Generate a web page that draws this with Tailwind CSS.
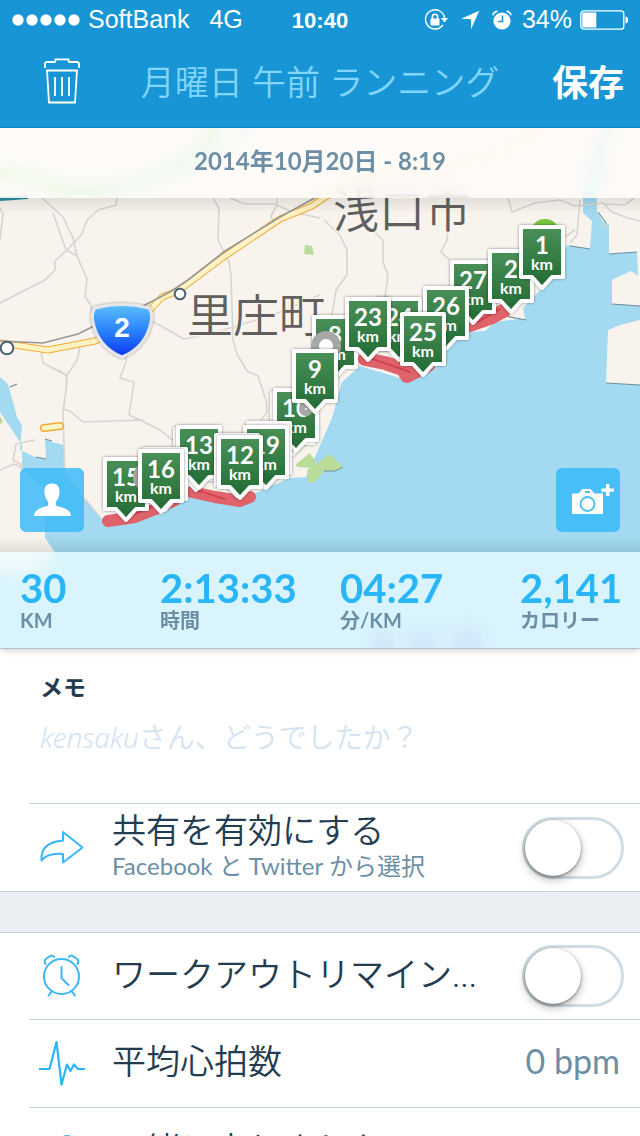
<!DOCTYPE html>
<html lang="ja">
<head>
  <meta charset="UTF-8">
  <meta name="viewport" content="width=device-width, initial-scale=1">
  <title>月曜日 午前 ランニング</title>
  <script src="https://cdn.jsdelivr.net/npm/@tailwindcss/browser@4"></script>
</head>
<body class="bg-white font-['Lato','Noto_Sans_CJK_JP',sans-serif] text-[#243c50]">

  <div class="h-screen flex flex-col overflow-hidden">

    <!-- Header -->
    <header class="shrink-0 h-32 bg-[#1795d4] text-white border-b border-[#0f85c4]">
      <!-- Status bar -->
      <div class="h-10 px-3 grid grid-cols-[1fr_auto_1fr] items-center font-['Liberation_Sans',sans-serif] text-[25px]">
        <div class="flex items-center">
          <svg class="w-[70px] h-3" viewBox="0 0 70 12" fill="currentColor">
            <circle cx="6" cy="6" r="5.7" /><circle cx="20" cy="6" r="5.7" /><circle cx="34" cy="6" r="5.7" /><circle cx="48" cy="6" r="5.7" /><circle cx="62" cy="6" r="5.7" />
          </svg>
          <span class="ml-1.5">SoftBank</span>
          <span class="ml-5">4G</span>
        </div>
        <span class="text-[22px] font-bold">10:40</span>
        <div class="flex items-center justify-end">
          <!-- rotation lock -->
          <svg class="w-6 h-6" viewBox="0 0 24 24" fill="none" stroke="currentColor" stroke-width="1.4">
            <path d="M18.9 17A9.6 9.6 0 1 1 20.6 10" />
            <path d="M17 10h7l-3.5 4.5z" fill="currentColor" stroke="none" />
            <rect x="6.5" y="10.5" width="9" height="7" rx=".8" fill="currentColor" stroke="none" />
            <path d="M8.4 11V8.8a2.6 2.6 0 0 1 5.2 0V11" stroke-width="1.6" />
          </svg>
          <!-- location arrow -->
          <svg class="w-5 h-5 ml-3" viewBox="0 0 20 20" fill="currentColor">
            <path d="M19.3.8 11 19.2V9.3L1 8.8z" />
          </svg>
          <!-- alarm -->
          <svg class="w-5 h-5 ml-3" viewBox="0 0 20 20" fill="none">
            <circle cx="10" cy="11" r="8.6" fill="currentColor" />
            <path d="M.8 5.2Q2 1.6 5.4 1.4M19.2 5.2Q18 1.6 14.6 1.4" stroke="currentColor" stroke-width="1.6" />
            <path d="M10.5 5.5v6H6.2" stroke="#1795d4" stroke-width="1.6" />
          </svg>
          <span class="ml-2.5">34%</span>
          <svg class="w-12 h-5 ml-2" viewBox="0 0 48 20">
            <rect x=".8" y=".8" width="43" height="18.4" rx="3" fill="none" stroke="currentColor" stroke-width="1.3" />
            <rect x="2.3" y="2.5" width="14" height="15" fill="currentColor" />
            <path d="M45.5 6.5q2.500 0 2.500 3.500t-2.500 3.500z" fill="currentColor" />
          </svg>
        </div>
      </div>

      <!-- Nav bar -->
      <div class="h-[84px] pl-10 pr-4 flex items-center justify-between">
        <button type="button" aria-label="削除" class="w-11">
          <svg class="w-11 h-12" viewBox="0 0 44 48" fill="none" stroke="currentColor" stroke-width="1.8">
            <path d="M5 10V6q0-2 2-2h7.500q1 0 1-1.200V1.400h13v1.400q0 1.200 1 1.200H37q2 0 2 2v4" />
            <path d="M7 12.500h30l-2 32H9z" />
            <path d="M15 19v19M22 19v19M29 19v19" />
          </svg>
        </button>
        <h1 class="ml-1 text-[34px] leading-10 font-[350] text-[#82d5fb]">月曜日 午前 ランニング</h1>
        <button type="button" class="text-[36px] leading-10 font-bold">保存</button>
      </div>
    </header>

    <!-- Map -->
    <section class="relative shrink-0 h-[521px] flex flex-col border-b border-[#b5c3d3] shadow-md">
      <svg class="absolute inset-0 w-full h-full" viewBox="0 128 640 520" preserveAspectRatio="xMidYMid slice">
        <defs>
          <linearGradient id="pinFill" x1="0" y1="0" x2="0" y2="1">
            <stop offset="0" stop-color="#4a9058" />
            <stop offset="1" stop-color="#216a34" />
          </linearGradient>
          <linearGradient id="shieldFill" x1="0" y1="0" x2="0" y2="1">
            <stop offset="0" stop-color="#5cc0fb" />
            <stop offset=".5" stop-color="#2a83fa" />
            <stop offset="1" stop-color="#0a35f5" />
          </linearGradient>
          <filter id="pinShadow" x="-20%" y="-20%" width="140%" height="140%">
            <feDropShadow dx="0" dy="0" stdDeviation="1.500" flood-color="#000" flood-opacity=".45" />
          </filter>
          <linearGradient id="edge" x1="0" y1="0" x2="0" y2="1">
            <stop offset="0" stop-color="#000" stop-opacity=".09" />
            <stop offset="1" stop-color="#000" stop-opacity="0" />
          </linearGradient>
          <path id="pin" d="M-21 2H21V52H10L0 63-10 52H-21Z" fill="url(#pinFill)" stroke="#fff" stroke-width="4" stroke-linejoin="round" filter="url(#pinShadow)" />
        </defs>

        <rect y="128" width="640" height="520" fill="#f8f4ed" />

        <!-- sea and inlets -->
        <g fill="#a3daf1">
          <path d="M105 522 160 512 185 492 235 503 262 490 290 478 306 477 318 450 332 418 342 382 360 366 400 378 440 350 465 332 485 331 495 322 525 318 523 308 540 290 552 262 568 245 590 248 590 228 583 213V190L602 128H611L597 195V212L603 222 609 224V254L637 252 638 276 631 271 612 280V304L640 306V648H0V574L42 572 55 552 45 538V490L22 468 22 445 0 412V377L8 384 17 417 22 425 20 450 35 457 46 459 45 439 52 442 64 445V474L78 492Z" />
        </g>
        <path d="M640 320 620 325 608 330 606 383 640 385Z" fill="#f8f4ed" />
        <path d="M570 246 590 248 592 221 583 213 582 225Z" fill="#f8f4ed" />
        <path d="M503 314 525 320 521 308Z" fill="#f8f4ed" />
        <path d="M570 246 590 249M609 254 637 252M612 304 640 306M606 383 640 385M505 316 526 320M10 387 17 384M598 212 606 223M36 457 46 459M45 439 52 441" fill="none" stroke="#6f8f99" stroke-width="1.200" />
        <path d="M0 416 3 422 0 424Z" fill="#b9dd98" />

        <!-- islands and parks -->
        <g fill="#b9dd98">
          <path d="M295 465 309 452 316 462 312 468 298 467Z" />
          <path d="M307 470 322 460 330 454 336 460 343 467 335 471 324 471 314 483 308 482Z" />
          <path d="M305 245 312 246 314 255 304 254Z" />
        </g>
        <path d="M292 477 288 455 308 445 310 453 296 464Z" fill="#f8f4ed" />
        <path d="M324 471H335L343 467" fill="none" stroke="#6f8f99" />

        <!-- side roads -->
        <g fill="none" stroke="#d6d5cf" stroke-width="1.600" stroke-linejoin="round">
          <path d="M0 303 45 280 55 270 55 261 67 250 82 234 87 220 98 210 116 205 118 190" />
          <path d="M53 213 66 250 77 256M42 198 63 217 73 238 77 256 87 279 85 297 91 305 92 318 100 330" />
          <path d="M213 198 219 208 218 240 229 262 231 275 233 340 237 354 247 371 258 376 266 400 267 412 261 420" />
          <path d="M230 198 245 204 275 204 292 212 320 218M277 198V205L271 216 273 222" />
          <path d="M152 321 184 339 210 334 240 325 275 314 320 295" />
          <path d="M41 352 43 363 66 375 67 386M80 347 77 360 67 375 66 390 63 412 65 475 100 517" />
          <path d="M127 350 126 362 120 378 134 382 129 415 142 421 160 430 175 442M63 409 70 411 83 422 143 420" />
          <path d="M0 470 14 464 22 468M35 440 16 444 13 460 22 465 22 475" />
          <path d="M324 220 340 235 347 250V275L336 290 332 315M370 228 383 240V262L388 275 385 297M448 230 447 240 441 252 453 263" />
          <path d="M508 198 512 212 535 203 560 200 575 206 603 203 612 212 625 217 640 221M605 204 625 205 634 198" />
          <path d="M570 243 577 235 580 200M603 225 609 228M575 230 560 240" />
          <path d="M0 208 3 214 0 240M58 370 67 376" />
        </g>

        <!-- green expressway -->
        <path d="M0 173Q30 173 50 184T110 188 165 172Q205 155 216 128" fill="none" stroke="#8be87f" stroke-width="9" />
        <path d="M110 192Q160 185 190 165T255 128" fill="none" stroke="#bfe3ef" stroke-width="6" />
        <path d="M0 199 28 197" stroke="#2a8d9b" stroke-width="4" />

        <!-- route 2 -->
        <g fill="none" stroke-linejoin="round">
          <path d="M0 343 48 350 95 341 140 321 162 297 178 291 225 256 280 219 312 206 345 184 400 170Q480 165 505 150L540 128" stroke="#f2ab35" stroke-width="7" />
          <path d="M0 343 48 350 95 341 140 321 162 297 178 291 225 256 280 219 312 206 345 184 400 170Q480 165 505 150L540 128" stroke="#fff2c4" stroke-width="5" />
          <path d="M0 341 43 343 78 334 110 318 143 306 170 292 188 280 225 251 280 217 320 195" stroke="#979797" stroke-width="1.600" />
          <path d="M44 428 60 426" stroke="#f2ab35" stroke-width="8" stroke-linecap="round" />
          <path d="M44 428 60 426" stroke="#fff6c8" stroke-width="5" stroke-linecap="round" />
        </g>
        <g fill="#fff" stroke="#4c6377" stroke-width="2">
          <circle cx="180" cy="294" r="5.300" /><circle cx="7" cy="348" r="6.300" />
        </g>

        <!-- place names -->
        <g class="font-['Noto_Sans_CJK_JP',sans-serif] font-[350] text-[46px]" fill="#606060" stroke="#f8f4ed" stroke-width="3" paint-order="stroke">
          <text x="187" y="332">里庄町</text>
          <text x="333" y="227">浅口市</text>
        </g>
        <path d="M372 630H394V648H372ZM410 630H437V648H410ZM452 628H482V648H452Z" fill="#86a8f0" />

        <!-- route shield -->
        <g filter="url(#pinShadow)">
          <path d="M95 308Q122 301 149 308 153 313 151 322 146 347 122 357 98 347 93 322 91 313 95 308Z" fill="url(#shieldFill)" stroke="#e6e6ea" stroke-width="3" />
        </g>
        <text x="122" y="337" text-anchor="middle" fill="#fff" class="font-['Liberation_Sans',sans-serif] font-bold text-[28px]">2</text>

        <!-- run track -->
        <g fill="none" stroke="#e0626a" stroke-linecap="round" stroke-linejoin="round">
          <path d="M108 521 135 517 158 508 175 500M192 492 215 497 240 501 250 497" stroke-width="12" />
          <path d="M365 359 385 363 403 369 407 376 428 365M470 325 490 318 505 310" stroke-width="14" />
          <path d="M130 516 160 503M196 490 225 499M370 358 410 372M478 322 500 309" stroke="#cc3f4b" stroke-width="1.500" />
        </g>
        <circle cx="545" cy="234" r="15" fill="#78c53c" />

        <g id="pins"></g>

        <rect y="198" width="640" height="16" fill="url(#edge)" />
        <rect y="536" width="640" height="16" fill="url(#edge)" transform="rotate(180 320 544)" />
      </svg>

      <div class="relative h-[70px] flex items-center justify-center bg-[#fffdfa]/80 backdrop-blur-sm text-2xl leading-8 pb-1 font-bold text-[#6c8fa6]">
        <time datetime="2014-10-20T08:19">2014年10月20日 - 8:19</time>
      </div>

      <div class="relative flex-1 p-5 flex items-end justify-between">
        <button type="button" aria-label="プロフィール" class="w-16 h-16 rounded-md bg-[#3dbaf8]/85 text-white">
          <svg class="w-16 h-16" viewBox="0 0 64 64" fill="currentColor">
            <path d="M32 15.500c5.500 0 8 3.500 7.500 9-.3 4.500-2 7.500-3.700 9.500v3.500c6 2 15 3.500 15.200 10.500H14c.2-7 8.500-8.500 14.200-10.500V34c-1.700-2-3.400-5-3.700-9.500-.5-5.500 2-9 7.500-9z" />
          </svg>
        </button>
        <button type="button" aria-label="写真を追加" class="w-16 h-16 rounded-md bg-[#3dbaf8]/90 text-white">
          <svg class="w-16 h-16" viewBox="0 0 64 64" fill="currentColor">
            <path d="M16 25.500h6.500l4-4.500h8l4 4.500H47V46H16z" />
            <path d="M29 23h5v2H29z" fill="#4abff6" />
            <circle cx="31.500" cy="36" r="7" fill="none" stroke="#4abff6" stroke-width="1.800" />
            <path d="M50 16h3.400v4.500H58v3.200h-4.600V28H50v-4.300h-4.500v-3.200H50z" />
          </svg>
        </button>
      </div>

      <!-- Totals -->
      <dl class="relative h-24 pl-5 pt-4 grid grid-cols-[7fr_9fr_9fr_6fr] bg-[#ebfcff]/75 backdrop-blur-sm text-xl font-bold text-[#6c8fa6]">
        <div class="flex flex-col-reverse justify-end">
          <dt class="leading-6">KM</dt>
          <dd class="text-[40px] leading-10 text-[#29b6f9]">30</dd>
        </div>
        <div class="flex flex-col-reverse justify-end">
          <dt class="leading-6">時間</dt>
          <dd class="text-[40px] leading-10 text-[#29b6f9]">2:13:33</dd>
        </div>
        <div class="flex flex-col-reverse justify-end">
          <dt class="leading-6">分/KM</dt>
          <dd class="text-[40px] leading-10 text-[#29b6f9]">04:27</dd>
        </div>
        <div class="flex flex-col-reverse justify-end">
          <dt class="leading-6">カロリー</dt>
          <dd class="text-[40px] leading-10 text-[#29b6f9]">2,141</dd>
        </div>
      </dl>
    </section>

    <!-- Details -->
    <main class="flex-1 min-h-0 overflow-hidden">
      <div class="h-[154px] px-10 pt-5">
        <label for="memo" class="block text-[23px] leading-9 font-bold">メモ</label>
        <div class="relative mt-3">
          <textarea id="memo" rows="1" placeholder=" " class="peer block w-full h-20 resize-none outline-none bg-transparent text-[28px] leading-10"></textarea>
          <p class="absolute top-0 left-0 pointer-events-none text-[28px] leading-10 font-[350] text-[#d3e3f1] peer-focus:hidden"><em class="font-['Noto_Sans',sans-serif] font-light">kensaku</em>さん、どうでしたか？</p>
        </div>
      </div>

      <div class="ml-[30px] h-[88px] pr-4 flex items-center border-t border-[#c6d0d5]">
        <svg class="w-16 h-16 shrink-0" viewBox="0 0 64 64" fill="none" stroke="#3bb7f5" stroke-width="2" stroke-linejoin="round">
          <path d="M33 16 52.500 31.500 33 46.500V38Q18 36.500 11.500 44.500 10 26.500 33 24.500Z" />
        </svg>
        <div class="ml-[18px] pb-1 flex-1 min-w-0">
          <label for="share" class="block text-[34px] leading-10 font-[350]">共有を有効にする</label>
          <p class="text-2xl leading-8 font-normal text-[#6c8fa6]">Facebook と Twitter から選択</p>
        </div>
        <input id="share" type="checkbox" role="switch" class="appearance-none shrink-0 w-[102px] h-[62px] rounded-full border-3 border-[#d0dde4] bg-white before:block before:size-14 before:rounded-full before:bg-white before:shadow-[0_4px_10px_rgba(0,0,0,0.25),0_1px_3px_rgba(0,0,0,0.45)] checked:bg-[#29b6f9] checked:before:ml-10">
      </div>

      <div class="h-[42px] bg-[#eaeff3] border-y border-[#c6d0d5]"></div>

      <div class="ml-[30px] h-[86px] pr-4 flex items-center">
        <svg class="w-16 h-16 shrink-0" viewBox="0 0 64 64" fill="none" stroke="#3bb7f5" stroke-width="2" stroke-linecap="round" stroke-linejoin="round">
          <circle cx="31.500" cy="32.500" r="17.500" />
          <path d="M31.500 23v11l7 7M22 47l-3.500 4.500M41.500 47l3.500 4.500" />
          <path d="M15.500 20q-2-3.500 1-5.500l4-2.600q2-1.200 3.600 1M47.500 20q2-3.500-1-5.500l-4-2.600q-2-1.200-3.600 1" />
        </svg>
        <label for="reminder" class="ml-[18px] pb-1 flex-1 min-w-0 mr-8 text-[34px] leading-10 font-[350] truncate">ワークアウトリマインダー</label>
        <input id="reminder" type="checkbox" role="switch" class="appearance-none shrink-0 w-[102px] h-[62px] rounded-full border-3 border-[#d0dde4] bg-white before:block before:size-14 before:rounded-full before:bg-white before:shadow-[0_4px_10px_rgba(0,0,0,0.25),0_1px_3px_rgba(0,0,0,0.45)] checked:bg-[#29b6f9] checked:before:ml-10">
      </div>

      <div class="ml-[30px] h-[88px] pr-5 flex items-center border-t border-[#c6d0d5] text-[34px] leading-10 font-[350]">
        <svg class="w-16 h-16 shrink-0" viewBox="0 0 64 64" fill="none" stroke="#29b6f9" stroke-width="2.200" stroke-linejoin="round">
          <path d="M9 37H19.500L26.500 10 31.500 52.500 37 32.500 40.500 39 44 32.500 48 37H55" />
        </svg>
        <span class="ml-[18px] pb-1.5 flex-1">平均心拍数</span>
        <span class="pb-1.5 font-normal text-[#6c8fa6]">0 bpm</span>
      </div>

      <div class="ml-[30px] h-[88px] pr-5 flex items-center border-t border-[#c6d0d5] text-[34px] leading-10 font-[350]">
        <svg class="w-16 h-16 shrink-0" viewBox="0 0 64 64" fill="none" stroke="#3bb7f5" stroke-width="2">
          <circle cx="37" cy="24" r="8" />
          <path d="M20 50q2-16 17-16t17 16z" />
        </svg>
        <span class="ml-[18px] pb-1.5 flex-1">一緒に走りました</span>
      </div>
    </main>
  </div>

  <script>
    // Kilometre markers, drawn back to front. x is the middle, y the top edge.
    const pins = [
      { x: 399, y: 297, km: 24 },
      { x: 335, y: 315, km: 8 },
      { x: 473, y: 260, km: 27 },
      { x: 446, y: 286, km: 26 },
      { x: 368, y: 297, km: 23 },
      { x: 423, y: 312, km: 25 },
      { x: 511, y: 249, km: 2 },
      { x: 542, y: 225, km: 1 },
      { x: 293, y: 391, km: "" },
      { x: 296, y: 388, km: 10 },
      { dot: true, x: 306, y: 409, r: 3 },
      { dot: true, x: 326, y: 346, r: 11 },
      { x: 315, y: 349, km: 9 },
      { x: 196, y: 427, km: "" },
      { x: 199, y: 425, km: 13 },
      { x: 269, y: 421, km: "" },
      { x: 266, y: 425, km: 19 },
      { x: 237, y: 433, km: "" },
      { x: 240, y: 435, km: 12 },
      { x: 126, y: 457, km: 15 },
      { dot: true, x: 148, y: 477, r: 11 },
      { x: 165, y: 447, km: "" },
      { x: 161, y: 449, km: 16 },
    ];

    document.getElementById("pins").innerHTML = pins.map((p) => {
      if (p.dot) {
        return `<circle cx="${p.x}" cy="${p.y}" r="${p.r}" fill="#fff" stroke="#a6a8a8" stroke-width="8" />`;
      }
      return `
        <g transform="translate(${p.x} ${p.y})" fill="#fff" text-anchor="middle" class="font-bold">
          <use href="#pin" />
          <text y="29" class="text-2xl">${p.km}</text>
          <text y="45" class="text-base">${p.km === "" ? "" : "km"}</text>
        </g>`;
    }).join("");
  </script>
</body>
</html>
